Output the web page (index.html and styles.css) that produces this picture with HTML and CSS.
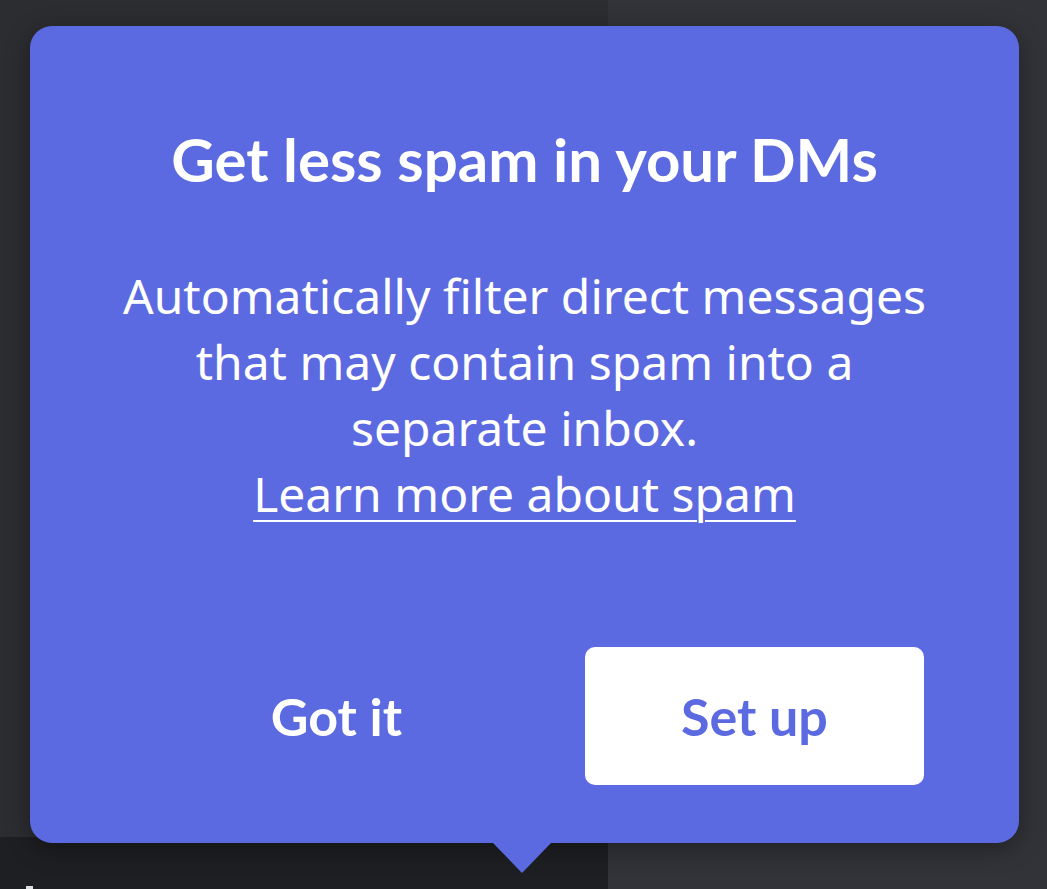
FILE: index.html
```html
<!DOCTYPE html>
<html lang="en">
<head>
  <meta charset="UTF-8" />
  <title>Spam filter tip</title>
  <link rel="stylesheet" href="styles.css">
</head>
<body>
  <div class="backdrop">
    <div class="side-left"><span class="stub"></span></div>
    <div class="side-right"></div>
  </div>
  <div class="popout">
    <h1>Get less spam in your DMs</h1>
    <p class="body">Automatically filter direct messages that may contain spam into a separate inbox.<br>
      <a href="#">Learn more about spam</a></p>
    <div class="actions">
      <button class="btn ghost">Got it</button>
      <button class="btn solid">Set up</button>
    </div>
  </div>
</body>
</html>
```

FILE: styles.css
```css
body {
  margin: 0;
  width: 1047px;
  height: 889px;
  overflow: hidden;
  font-family: Lato, "Noto Sans", sans-serif;
  position: relative;
  background: #313338;
}
.backdrop {
  display: flex;
  height: 100%;
}
.side-left {
  width: 608px;
  background: linear-gradient(#2b2d31 0, #2b2d31 837px, #1e1f22 837px);
  position: relative;
}
.side-right { flex: 1; background: #313338; }
.stub {
  position: absolute;
  left: 26px; top: 886px;
  width: 7px; height: 3px;
  background: #dbdee1;
}
.popout {
  position: absolute;
  left: 30px; top: 26px;
  width: 989px; height: 817px;
  box-sizing: border-box;
  background: #5c6ae1;
  border-radius: 22px;
  box-shadow: 0 6px 24px rgba(0, 0, 0, 0.35);
  color: #fff;
  text-align: center;
  padding: 98px 60px 58px;
  display: flex;
  flex-direction: column;
}
.popout:after {
  content: "";
  position: absolute;
  left: 463px; bottom: -30px;
  border-left: 29px solid transparent;
  border-right: 29px solid transparent;
  border-top: 30px solid #5c6ae1;
}
h1 {
  margin: 0;
  font-size: 60px;
  line-height: 70px;
  font-weight: 700;
}
.body {
  margin: 69px auto 0;
  max-width: 830px;
  font-family: "Noto Sans", sans-serif;
  font-size: 48px;
  line-height: 66px;
}
.body a { color: #fff; text-decoration: underline; text-underline-offset: 8px; text-decoration-thickness: 2px; }
.actions {
  margin-top: auto;
  display: flex;
  justify-content: flex-end;
  gap: 79px;
  padding-right: 35px;
}
.btn {
  width: 339px; height: 138px;
  border: none; border-radius: 10px;
  font-family: inherit;
  font-size: 52px; font-weight: 700;
  cursor: pointer;
}
.ghost { background: transparent; color: #fff; }
.solid { background: #fff; color: #5c6ae1; }
```
